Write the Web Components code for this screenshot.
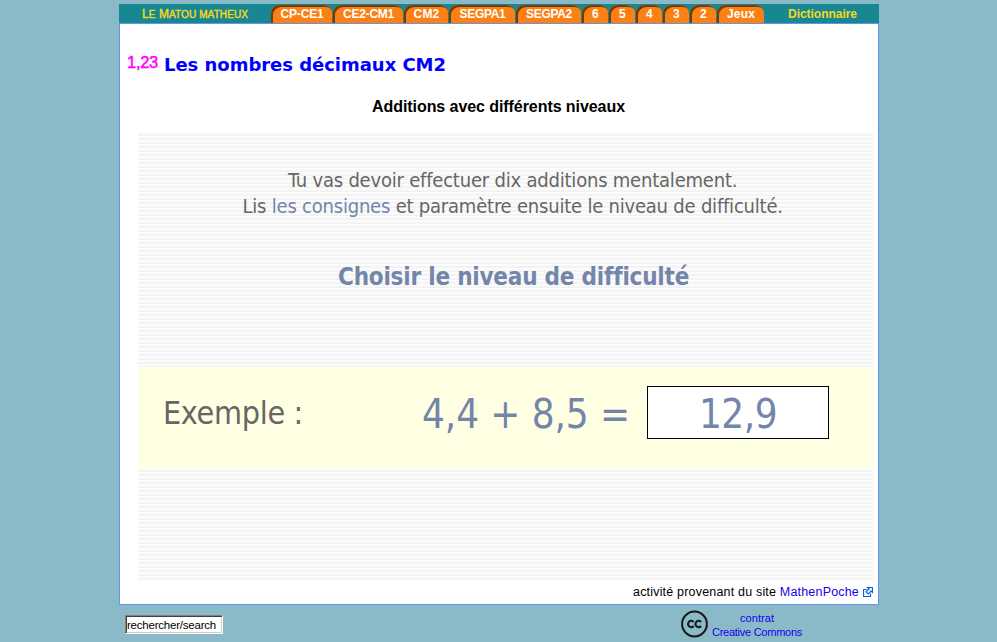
<!DOCTYPE html>
<html lang="fr"><head><meta charset="utf-8"><title>Le Matou matheux</title>
<style>html,body{margin:0;height:642px;overflow:hidden;background:#8abac8;font-family:"Liberation Sans",Arial,sans-serif}</style></head>
<body><matou-page></matou-page>
<script>
// Text line whose letter spacing is adjusted to fill the given width.
customElements.define('fit-text', class extends HTMLElement {
  constructor(){super();this.attachShadow({mode:'open'}).innerHTML='<style>:host{display:block;white-space:pre}span{display:inline-block}</style><span><slot></slot></span>';}
  connectedCallback(){
    const s=this.shadowRoot.querySelector('span'),w=+this.getAttribute('width');
    s.style.letterSpacing='0';
    const m=s.getBoundingClientRect().width;
    const n=this.textContent.length;
    s.style.letterSpacing=((w-m)/n)+'px';
    this.style.width=w+'px';
  }
});
customElements.define('nav-tab', class extends HTMLElement {
  constructor(){super();this.attachShadow({mode:'open'}).innerHTML=`<style>
  :host{display:block;box-sizing:border-box;height:18px;background:#fb8114;border-radius:9px 9px 0 0/8px 8px 0 0;box-shadow:inset 2px 2px 0 #783a08;color:#fff;font:bold 12px/18px "Liberation Sans",sans-serif;margin-right:1px;padding-left:1px}
  div{display:flex;justify-content:center}</style><div><slot></slot></div>`;}
  connectedCallback(){this.style.width=this.getAttribute('width')+'px';}
});
customElements.define('nav-bar', class extends HTMLElement {
  constructor(){super();
  const tabs=[['CP-CE1',61,43],['CE2-CM1',70,51],['CM2',44,26],['SEGPA1',66,46],['SEGPA2',65,46],['6',26,7],['5',26,7],['4',26,7],['3',26,7],['2',26,7],['Jeux',47,28]];
  this.attachShadow({mode:'open'}).innerHTML=`<style>
  :host{display:flex;height:19px;background:#178891;color:#f9d71c;font:bold 12px/19px "Liberation Sans",sans-serif;align-items:flex-end;width:760px}
  .brand{width:129px;padding-left:23px;height:19px;font-weight:normal;-webkit-text-stroke:.4px #f9d71c}
  .brand small{font-size:10px;text-transform:uppercase}
  .brand fit-text{line-height:20px}.dict{padding-left:23px;height:19px;line-height:20px}</style>
  <div class="brand"><fit-text width="106">L<small>e</small> M<small>atou matheux</small></fit-text></div>
  ${tabs.map(t=>`<nav-tab width="${t[1]}"><fit-text width="${t[2]}">${t[0]}</fit-text></nav-tab>`).join('')}
  <div class="dict"><fit-text width="69">Dictionnaire</fit-text></div>`;}
});
customElements.define('addition-exercise', class extends HTMLElement {
  constructor(){super();this.attachShadow({mode:'open'}).innerHTML=`<style>
  :host{display:flex;flex-direction:column;align-items:center;width:735px;height:448px;margin-left:18px;color:#666;font-family:"DejaVu Sans Condensed","DejaVu Sans",sans-serif;font-stretch:condensed;
  background:repeating-linear-gradient(#f9f9f9 0 1px,#f6f6f6 1px 2px,#f1f1f1 2px 3px,#fefefe 3px 4px)}
  .intro{padding-top:34px;display:flex;flex-direction:column;align-items:center;font-size:20px;line-height:26px;margin-left:14px}
  .choose{margin-top:43px;margin-left:14px;font-size:24px;line-height:30px;font-weight:bold}
  .blue,.choose{color:#7485aa}
  .example{margin-top:75px;box-sizing:border-box;width:735px;height:101px;background:#ffffe3;display:flex;align-items:flex-start;padding:19px 0 0 25px}
  .label{font-size:32px;line-height:55px;width:259px}.sum{font-size:40px;line-height:56px;color:#7485aa;width:225px}
  .answer{box-sizing:border-box;width:182px;height:53px;border:1px solid #000;background:#fff;color:#7485aa;font-size:40px;line-height:54px;display:flex;justify-content:center}
  </style>
  <div class="intro"><fit-text width="449">Tu vas devoir effectuer dix additions mentalement.</fit-text><fit-text width="540">Lis <span class="blue">les consignes</span> et paramètre ensuite le niveau de difficulté.</fit-text></div>
  <div class="choose"><fit-text width="349">Choisir le niveau de difficulté</fit-text></div>
  <div class="example"><div class="label"><fit-text width="140">Exemple :</fit-text></div><div class="sum"><fit-text width="208">4,4 + 8,5 =</fit-text></div><div class="answer"><fit-text width="78">12,9</fit-text></div></div>`;}
});
customElements.define('external-icon', class extends HTMLElement {
  constructor(){super();this.attachShadow({mode:'open'}).innerHTML=`<style>:host{display:block;width:10px;height:10px}svg{display:block}</style>
  <svg width="10" height="10" viewBox="0 0 10 10" fill="#fff" stroke="#0666dc" stroke-width="1.2"><path d="M3.5 2.5h-3v7h7v-3"/><path d="M4.5 .5h5v5L8 4 5.2 7 3 4.8 6 2z"/></svg>`;}
});
customElements.define('cc-logo', class extends HTMLElement {
  constructor(){super();this.attachShadow({mode:'open'}).innerHTML=`<style>:host{display:block;width:28px;height:28px}svg{display:block}</style>
  <svg width="28" height="28" viewBox="0 0 28 28" fill="none" stroke="#171717"><circle cx="13.5" cy="14" r="12.4" stroke-width="2"/><g stroke-width="2.1"><path d="M12.6 12A3.1 3.2 0 1 0 12.6 16"/><path d="M20 12A3.1 3.2 0 1 0 20 16"/></g></svg>`;}
});
customElements.define('matou-page', class extends HTMLElement {
  constructor(){super();this.attachShadow({mode:'open'}).innerHTML=`<style>
  :host{display:block;width:760px;margin-left:119px;padding-top:4px}
  main{box-sizing:border-box;width:760px;height:582px;background:#fff;border:1px solid #6495ed}
  header{display:flex;height:49px;padding:24px 0 0 7px;align-items:flex-start}
  .num{color:#f0f;font-size:16.5px;line-height:29px;width:37px;-webkit-text-stroke:.5px #f0f}
  h1{margin:0;color:#00f;font:bold 18px/33px "DejaVu Sans",Verdana,sans-serif}
  h2{margin:0;padding:0 0 0 252px;font-size:16px;line-height:20px;height:36px}
  .source{display:flex;justify-content:flex-end;align-items:center;font-size:12.5px;line-height:18px;height:19px;padding:1px 5px 0 0;gap:4px}
  .link{color:#1a00e8}
  footer{display:flex;height:34px;font-size:12px}
  .search{box-sizing:border-box;width:98px;height:19px;margin:10px 0 0 6px;background:#fff;border:1px solid;border-color:#808080 #fff #fff #808080;box-shadow:inset 1px 1px #404040,inset -1px -1px #d4d0c8;font-size:11.5px;line-height:18px;padding-left:1px}
  cc-logo{margin:5px 0 0 458px}
  .licence{color:#1500f0;font-size:11px;line-height:14px;padding:6px 0 0 3px;display:flex;flex-direction:column;align-items:center}
  </style>
  <nav-bar></nav-bar>
  <main><header><div class="num"><fit-text width="31">1,23</fit-text></div><h1><fit-text width="282">Les nombres décimaux CM2</fit-text></h1></header>
  <h2><fit-text width="253">Additions avec différents niveaux</fit-text></h2>
  <addition-exercise></addition-exercise>
  <div class="source"><fit-text width="226">activité provenant du site <span class="link">MathenPoche</span></fit-text><external-icon></external-icon></div></main>
  <footer><div class="search"><fit-text width="89">rechercher/search</fit-text></div><cc-logo></cc-logo><div class="licence"><fit-text width="34">contrat</fit-text><fit-text width="90">Creative Commons</fit-text></div></footer>`;}
});
</script></body></html>
